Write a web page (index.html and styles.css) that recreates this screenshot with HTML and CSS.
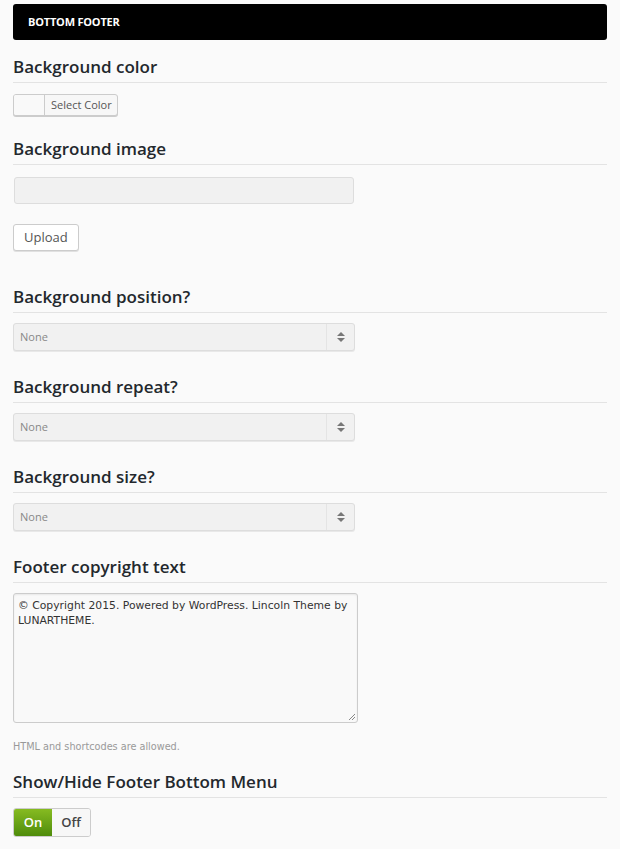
FILE: index.html
```html
<!DOCTYPE html>
<html>
<head>
<meta charset="utf-8">
<link rel="stylesheet" href="styles.css">
</head>
<body>
<div class="page">
  <div class="bar">BOTTOM FOOTER</div>

  <section class="opt">
    <h3 class="title">Background color</h3>
    <div class="color-btn"><span class="swatch"></span><span class="color-label">Select Color</span></div>
  </section>

  <section class="opt">
    <h3 class="title">Background image</h3>
    <div class="text-input"></div>
    <div class="btn">Upload</div>
  </section>

  <section class="opt opt-select">
    <h3 class="title">Background position?</h3>
    <div class="select"><span class="select-val">None</span><span class="select-arrow"><i class="up"></i><i class="down"></i></span></div>
  </section>

  <section class="opt opt-select">
    <h3 class="title">Background repeat?</h3>
    <div class="select"><span class="select-val">None</span><span class="select-arrow"><i class="up"></i><i class="down"></i></span></div>
  </section>

  <section class="opt opt-select">
    <h3 class="title">Background size?</h3>
    <div class="select"><span class="select-val">None</span><span class="select-arrow"><i class="up"></i><i class="down"></i></span></div>
  </section>

  <section class="opt">
    <h3 class="title">Footer copyright text</h3>
    <div class="textarea">© Copyright 2015. Powered by WordPress. Lincoln Theme by LUNARTHEME.<svg class="grip" width="8" height="8" viewBox="0 0 8 8"><path d="M7 1L1 7M7 4L4 7" stroke="#888" stroke-width="1"/></svg></div>
    <p class="hint">HTML and shortcodes are allowed.</p>
  </section>

  <section class="opt opt-toggle">
    <h3 class="title">Show/Hide Footer Bottom Menu</h3>
    <div class="toggle"><span class="on">On</span><span class="off">Off</span></div>
  </section>
</div>
</body>
</html>
```
FILE: styles.css
```css
html, body {
  margin: 0;
  padding: 0;
  background: #fafafa;
}
body {
  font-family: "Open Sans", "DejaVu Sans", sans-serif;
  color: #23282d;
}
.page {
  padding: 4px 13px 0 13px;
}
.bar {
  background: #000;
  color: #fff;
  border-radius: 3px;
  height: 36px;
  line-height: 36px;
  padding-left: 15px;
  font-size: 11px;
  font-weight: 700;
  letter-spacing: -0.2px;
}
.opt {
  margin-top: 15px;
}
.opt + .opt {
  margin-top: 21px;
}
.opt-select + .opt {
  margin-top: 24px;
}
.opt + .opt-toggle {
  margin-top: 15px;
}
.title {
  margin: 0;
  font-size: 17px;
  font-weight: 600;
  line-height: 24px;
  padding-bottom: 3px;
  border-bottom: 1px solid #e3e3e3;
  color: #23282d;
}
.color-btn {
  margin-top: 11px;
  display: flex;
  width: 103px;
  height: 20px;
  border: 1px solid #ccc;
  border-radius: 3px;
  background: #f7f7f7;
  box-shadow: 0 1px 0 #ccc;
  overflow: hidden;
}
.swatch {
  width: 30px;
  border-right: 1px solid #ccc;
  background: #f9f9f9;
}
.color-label {
  font-size: 11px;
  line-height: 20px;
  color: #555;
  padding-left: 6px;
}
.text-input {
  margin-top: 12px;
  width: 338px;
  height: 25px;
  margin-left: 1px;
  background: #f1f1f1;
  border: 1px solid #ddd;
  border-radius: 3px;
}
.btn {
  margin-top: 20px;
  margin-bottom: 13px;
  display: inline-block;
  height: 25px;
  line-height: 25px;
  padding: 0 10px;
  border: 1px solid #ccc;
  border-radius: 3px;
  background: #fff;
  box-shadow: 0 1px 0 #e0e0e0;
  font-size: 13px;
  color: #555;
}
.opt .select {
  margin-top: 10px;
}
.select {
  display: flex;
  width: 340px;
  height: 26px;
  background: #f1f1f1;
  border: 1px solid #ddd;
  border-radius: 3px;
  box-shadow: 0 1px 0 #e8e8e8;
}
.select-val {
  flex: 1;
  font-size: 11px;
  line-height: 26px;
  color: #888;
  padding-left: 6px;
}
.select-arrow {
  width: 27px;
  border-left: 1px solid #e4e4e4;
  display: flex;
  flex-direction: column;
  align-items: center;
  justify-content: center;
  gap: 2px;
}
.select-arrow i {
  display: block;
  width: 0;
  height: 0;
  border-left: 4px solid transparent;
  border-right: 4px solid transparent;
}
.select-arrow .up {
  border-bottom: 4px solid #777;
}
.select-arrow .down {
  border-top: 4px solid #777;
}
.textarea {
  position: relative;
  margin-top: 10px;
  width: 336px;
  height: 120px;
  padding: 4px 3px 4px 4px;
  border: 1px solid #ccc;
  border-radius: 3px;
  background: #f9f9f9;
  box-shadow: inset 0 1px 2px rgba(0,0,0,0.07);
  font-family: "DejaVu Sans", sans-serif;
  font-size: 10.8px;
  line-height: 15px;
  color: #333;
}
.grip {
  position: absolute;
  right: 1px;
  bottom: 1px;
}
.hint {
  margin: 16px 0 0 0;
  font-family: "DejaVu Sans", sans-serif;
  font-size: 9.7px;
  color: #999;
  line-height: 16px;
}
.toggle {
  margin-top: 10px;
  display: inline-flex;
  height: 27px;
  border: 1px solid #ccc;
  border-radius: 3px;
  overflow: hidden;
  font-size: 13px;
  font-weight: 600;
}
.toggle .on {
  width: 38px;
  text-align: center;
  line-height: 27px;
  color: #fff;
  background: linear-gradient(#86bb21, #4f8c0b);
}
.toggle .off {
  width: 38px;
  text-align: center;
  line-height: 27px;
  color: #444;
  background: #f7f7f7;
}
```
